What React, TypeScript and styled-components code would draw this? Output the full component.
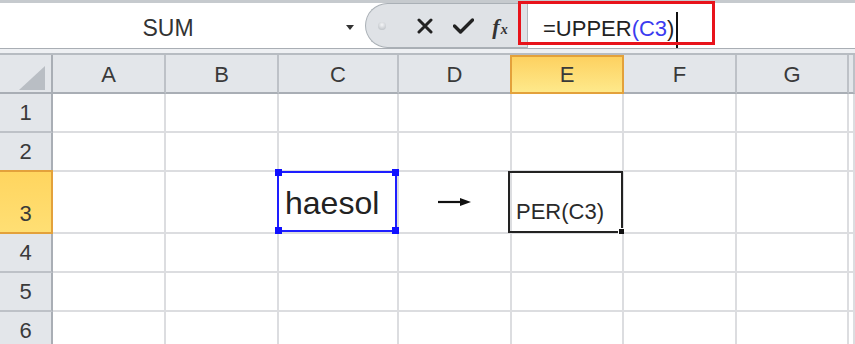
import React from 'react'
import styled, { createGlobalStyle } from 'styled-components'

const GlobalStyle = createGlobalStyle`
  html, body {
    margin: 0;
    padding: 0;
    background: #ffffff;
    overflow: hidden;
  }
  body {
    font-family: "Liberation Sans", Arial, sans-serif;
  }
`

export const Screen = styled.div`
  position: relative;
  width: 855px;
  height: 344px;
  overflow: hidden;
  background: #ffffff;
`

export const FormulaBar = styled.div`
  display: flex;
  height: 45px;
  border-top: 3px solid #c6cace;
  border-bottom: 1px solid #a9aeb4;
  background: #ffffff;
`

export const NameBox = styled.div`
  display: flex;
  align-items: center;
  width: 365px;
  flex: none;
`

export const NameText = styled.span`
  width: 336px;
  text-align: center;
  font-size: 23px;
  color: #333;
  margin-top: 5px;
`

export const DropArrow = styled.span`
  margin-left: 10px;
  margin-top: 3px;
  width: 0;
  height: 0;
  border-left: 4px solid transparent;
  border-right: 4px solid transparent;
  border-top: 5px solid #333;
`

export const Pill = styled.div`
  display: flex;
  align-items: center;
  width: 162px;
  flex: none;
  box-sizing: border-box;
  background: #dfe2e6;
  border: 1px solid #aab0b6;
  border-right: none;
  border-radius: 23px 0 0 23px;
  padding-left: 12px;
`

export const Grip = styled.span`
  width: 8px;
  height: 8px;
  border-radius: 50%;
  background: radial-gradient(circle at 50% 35%, #f4f5f7, #b3b8be);
  margin-right: 27px;
`

export const ToolIcon = styled.span<{ $w: number }>`
  display: flex;
  align-items: center;
  justify-content: center;
  width: ${(p) => p.$w}px;
  color: #222;
`

export const Fx = styled.span`
  font-family: "Liberation Serif", "Times New Roman", serif;
  font-style: italic;
  font-weight: bold;
  font-size: 22px;
  color: #333;
  margin-top: 2px;
  & small {
    font-size: 14px;
    margin-left: 1px;
  }
`

export const FormulaInput = styled.div`
  flex: 1;
  display: flex;
  align-items: center;
  border-left: 1px solid #b3b8be;
  padding-left: 15px;
  font-size: 22px;
  color: #222;
`

export const FormulaText = styled.span`
  line-height: 22px;
  margin-top: 7px;
`

export const Ref = styled.span`
  color: #3b3bf0;
`

export const Caret = styled.span`
  align-self: flex-end;
  width: 2px;
  height: 36px;
  margin-left: 2px;
  background: #111;
`

export const Strip = styled.div`
  height: 4px;
  background: #eef0f3;
`

export const Sheet = styled.div`
  display: grid;
  grid-template-columns: 53px 113px 113px 120px 113px 112px 113px 112px 1fr;
  grid-template-rows: 39px 39px 39px 62px 39px 39px 39px;
  border-top: 2px solid #b7bcc2;
`

export const Corner = styled.div`
  position: relative;
  background: #e3e6ea;
  border-right: 2px solid #a9aeb5;
  border-bottom: 2px solid #a9aeb5;
  box-sizing: border-box;
`

export const ColHead = styled.div<{ $active?: boolean }>`
  display: flex;
  align-items: center;
  justify-content: center;
  box-sizing: border-box;
  font-size: 22px;
  color: #3a3a3a;
  background: ${(p) => (p.$active ? 'linear-gradient(#fdd05e, #fee98b)' : '#e3e6ea')};
  border-right: 2px solid ${(p) => (p.$active ? '#e3a13b' : '#bdc1c7')};
  border-bottom: 2px solid ${(p) => (p.$active ? '#e3a13b' : '#a9aeb5')};
  box-shadow: ${(p) => (p.$active ? 'inset 0 2px 0 #e3a13b, -2px 0 0 #e3a13b' : 'none')};
  padding-top: 2px;
`

export const RowHead = styled.div<{ $active?: boolean }>`
  display: flex;
  align-items: flex-end;
  justify-content: center;
  box-sizing: border-box;
  font-size: 22px;
  line-height: 22px;
  padding-bottom: 7px;
  color: #3a3a3a;
  background: ${(p) => (p.$active ? 'linear-gradient(#ffd55f, #ffdf74)' : '#e3e6ea')};
  border-right: 2px solid ${(p) => (p.$active ? '#e3a13b' : '#a9aeb5')};
  border-bottom: 2px solid ${(p) => (p.$active ? '#e3a13b' : '#bdc1c7')};
  box-shadow: ${(p) => (p.$active ? '0 -2px 0 #e3a13b' : 'none')};
`

export const Cell = styled.div`
  position: relative;
  display: flex;
  align-items: center;
  box-sizing: border-box;
  border-right: 2px solid #dcdde0;
  border-bottom: 2px solid #dcdde0;
  color: #222;
`

export const BigText = styled.span`
  font-size: 32px;
  padding-left: 6px;
  margin-top: 2px;
`

export const Arrow = styled.svg`
  margin: 0 auto;
  margin-top: -1px;
`

export const ResultText = styled.span`
  align-self: flex-end;
  font-size: 22px;
  padding-left: 4px;
  padding-bottom: 7px;
  color: #2a2a2a;
`

export const RefBox = styled.div`
  position: absolute;
  top: -1px;
  left: -2px;
  right: 0;
  bottom: 0;
  border: 2px solid #1e1eff;
`

export const Handle = styled.span<{ $x: 'left' | 'right'; $y: 'top' | 'bottom' }>`
  position: absolute;
  width: 7px;
  height: 7px;
  background: #1010ff;
  ${(p) => p.$x}: -4px;
  ${(p) => p.$y}: -4px;
`

export const ActiveBox = styled.div`
  position: absolute;
  top: -1px;
  left: -4px;
  right: -1px;
  bottom: -1px;
  border: 2px solid #222;
`

export const FillHandle = styled.span`
  position: absolute;
  right: -3px;
  bottom: -3px;
  width: 5px;
  height: 5px;
  background: #111;
  border-top: 1px solid #fff;
  border-left: 1px solid #fff;
`

export const Annotation = styled.div`
  position: absolute;
  left: 518px;
  top: 1px;
  width: 197px;
  height: 44px;
  box-sizing: border-box;
  border: 3px solid #e8131b;
`

const columns = ['A', 'B', 'C', 'D', 'E', 'F', 'G', '']
const rows = [1, 2, 3, 4, 5, 6]

const CloseIcon = () => (
  <svg width="16" height="16" viewBox="0 0 16 16">
    <path d="M2 2 L14 14 M14 2 L2 14" stroke="#222" strokeWidth="3" strokeLinecap="round" />
  </svg>
)

const CheckIcon = () => (
  <svg width="21" height="16" viewBox="0 0 21 16">
    <path d="M1.5 8 L7.5 14 L19.5 2" stroke="#222" strokeWidth="3.4" fill="none" strokeLinejoin="round" strokeLinecap="round" />
  </svg>
)

function renderCell(col: string, row: number) {
  if (row === 3 && col === 'C') {
    return (
      <Cell key={col + row}>
        <BigText>haesol</BigText>
        <RefBox>
          <Handle $x="left" $y="top" />
          <Handle $x="right" $y="top" />
          <Handle $x="left" $y="bottom" />
          <Handle $x="right" $y="bottom" />
        </RefBox>
      </Cell>
    )
  }
  if (row === 3 && col === 'D') {
    return (
      <Cell key={col + row}>
        <Arrow width="33" height="10" viewBox="0 0 33 10">
          <path d="M0 5 H24" stroke="#111" strokeWidth="2.2" />
          <path d="M22 1 L33 5 L22 9 Z" fill="#111" />
        </Arrow>
      </Cell>
    )
  }
  if (row === 3 && col === 'E') {
    return (
      <Cell key={col + row}>
        <ResultText>PER(C3)</ResultText>
        <ActiveBox>
          <FillHandle />
        </ActiveBox>
      </Cell>
    )
  }
  return <Cell key={col + row} />
}

const App = () => {
  return (
    <Screen>
      <GlobalStyle />
      <FormulaBar>
        <NameBox>
          <NameText>SUM</NameText>
          <DropArrow />
        </NameBox>
        <Pill>
          <Grip />
          <ToolIcon $w={24}>
            <CloseIcon />
          </ToolIcon>
          <ToolIcon $w={52}>
            <CheckIcon />
          </ToolIcon>
          <ToolIcon $w={22}>
            <Fx>
              f<small>x</small>
            </Fx>
          </ToolIcon>
        </Pill>
        <FormulaInput>
          <FormulaText>
            =UPPER<Ref>(C3</Ref>)
          </FormulaText>
          <Caret />
        </FormulaInput>
      </FormulaBar>
      <Strip />
      <Sheet>
        <Corner>
          <svg width="26" height="24" viewBox="0 0 26 24" style={{ position: 'absolute', right: 6, bottom: 2 }}>
            <path d="M0 24 L26 24 L26 0 Z" fill="#b9bec4" />
          </svg>
        </Corner>
        {columns.map((c, i) => (
          <ColHead key={'h' + i} $active={c === 'E'}>
            {c}
          </ColHead>
        ))}
        {rows.map((r) => (
          <React.Fragment key={r}>
            <RowHead $active={r === 3}>{r}</RowHead>
            {columns.map((c) => renderCell(c || 'H', r))}
          </React.Fragment>
        ))}
      </Sheet>
      <Annotation />
    </Screen>
  )
}

export default App
